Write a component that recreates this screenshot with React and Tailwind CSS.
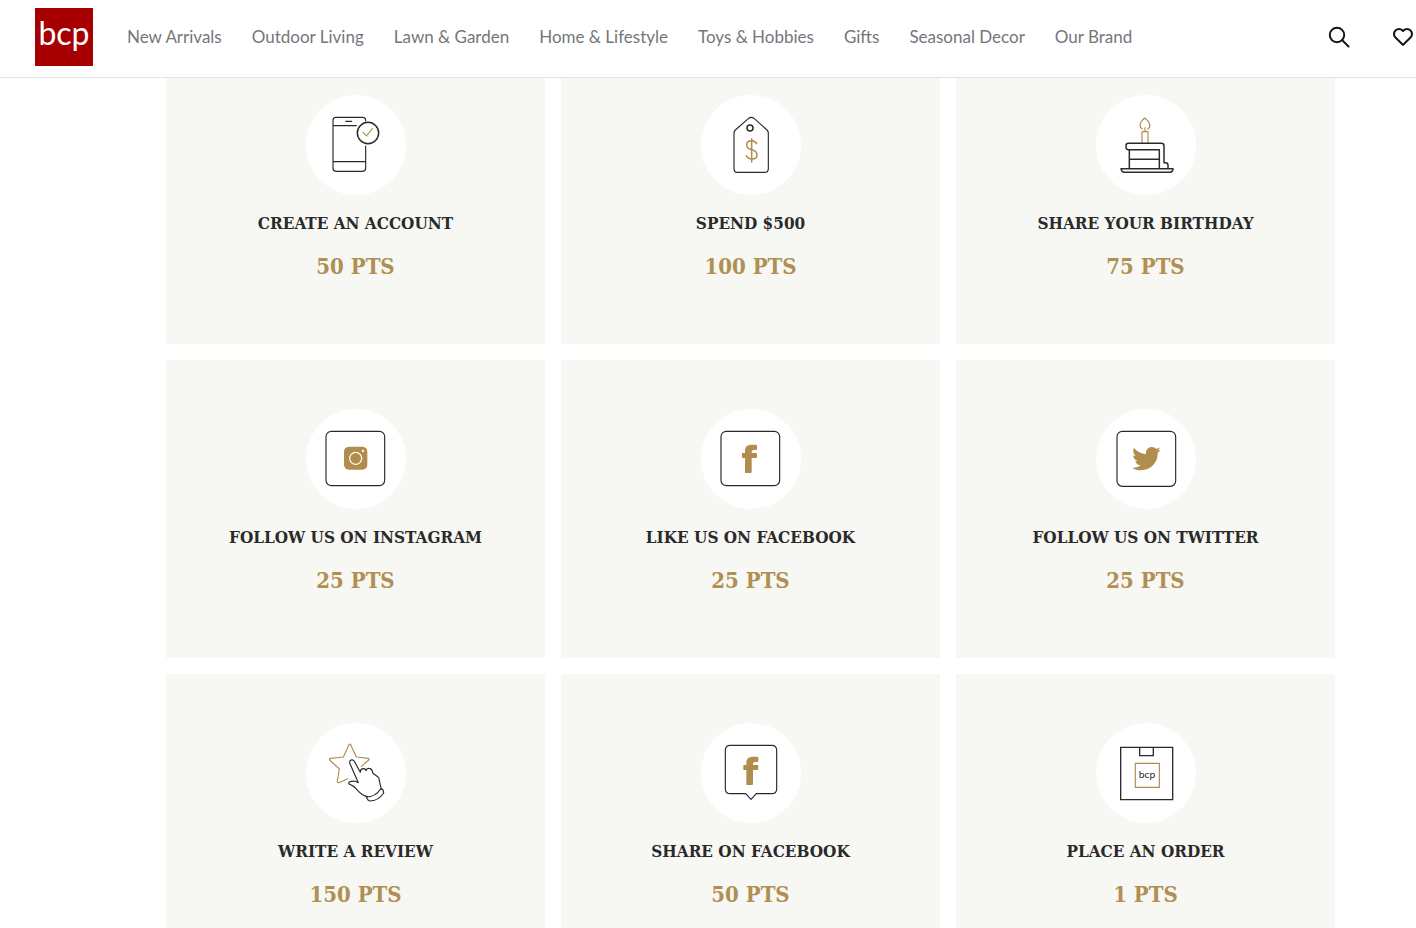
import { BiHeart } from "react-icons/bi";
import { FaTwitter } from "react-icons/fa";

const INK = "#2a2a2c";
const GOLD = "#b08d4c";

const links = [
  "New Arrivals",
  "Outdoor Living",
  "Lawn & Garden",
  "Home & Lifestyle",
  "Toys & Hobbies",
  "Gifts",
  "Seasonal Decor",
  "Our Brand",
];

function Badge({ children }) {
  return (
    <svg
      viewBox="15 15 300 300"
      className="size-[100px] rounded-full bg-white"
      fill="none"
      stroke={INK}
      strokeWidth="3.5"
      strokeLinecap="round"
      strokeLinejoin="round"
      aria-hidden="true"
    >
      {children}
    </svg>
  );
}

function FacebookMark({ x, y }) {
  return (
    <path
      transform={`translate(${x} ${y})`}
      d="M9 85V40H0V25h9V19C9 6 16 0 29 0h13q3 0 3 3v10q0 3-3 3h-7q-6 0-6 6v3h13q3 0 3 3v9q0 3-3 3H29v42q0 3-3 3z"
      fill={GOLD}
      stroke="none"
    />
  );
}

function PhoneIcon() {
  return (
    <Badge>
      <path d="M194 92v-1q0-9-9-9h-80q-9 0-9 9v144q0 9 9 9h80q9 0 9-9v-67M96 107h70M96 215h98M134 94h18" />
      <circle cx="201" cy="129" r="32" strokeWidth="4.5" />
      <path d="M187 127l9 11 18-22" stroke={GOLD} />
    </Badge>
  );
}

function TagIcon() {
  return (
    <Badge>
      <path d="M158 85q8-6 16 0l39 35q4 4 4 9v107q0 11-11 11h-82q-10 0-10-11V129q0-5 4-9z" />
      <circle cx="162" cy="114" r="9" strokeWidth="4.5" />
      <path
        d="M167 146v70M182 161q-5-9-16-9-14 0-14 13 0 9 12 13l9 3q10 4 10 13 0 13-15 13-12 0-17-10"
        stroke={GOLD}
        strokeWidth="4.5"
      />
    </Badge>
  );
}

function CakeIcon() {
  return (
    <Badge>
      <path d="M153 159v-34h18v34M162 124v-11M154 117c-10-6-10-19 7-33 19 14 19 27 9 33" stroke={GOLD} />
      <path
        d="M115 179h-3q-7 0-7-7v-5q0-7 7-7h99q8 0 8 8v50h5q7 0 7 8v8M115 235v-56h90v56M115 208h90M90 236h156q-1 11-9 11H100q-8 0-10-11z"
        strokeWidth="4.5"
      />
    </Badge>
  );
}

function InstagramIcon() {
  return (
    <Badge>
      <rect x="75" y="82" width="176" height="163" rx="16" />
      <rect x="129" y="128" width="70" height="69" rx="15" fill={GOLD} stroke="none" />
      <circle cx="164" cy="163" r="18" stroke="#fff" />
      <circle cx="186" cy="141" r="3.5" fill="#fff" stroke="none" />
    </Badge>
  );
}

function FacebookIcon() {
  return (
    <Badge>
      <rect x="75" y="82" width="176" height="163" rx="16" />
      <FacebookMark x={138} y={122} />
    </Badge>
  );
}

function TwitterIcon() {
  return (
    <Badge>
      <rect x="78" y="82" width="176" height="165" rx="16" />
      <FaTwitter x="123" y="121" size={86} color={GOLD} stroke="none" />
    </Badge>
  );
}

function ReviewIcon() {
  return (
    <Badge>
      <path
        d="M140 182l-26 12q-6 1-5-5l6-36-29-27q-2-4 3-5l38-4 17-37q3-3 5 0l17 37 35 4q5 1 2 5l-22 20"
        stroke={GOLD}
      />
      <path d="M172 194l-25-57q-3-8 3-11 7-2 10 4l18 33q0-10 8-11 7-1 9 6 2-8 9-7 9 0 12 15l14 10q5 4 5 12l6 26M172 194c-9-6-19-5-27-2-3 3-2 6 3 8 19 6 24 30 51 36" />
      <path d="M196 237q27 0 43-24 5-2 7 3l2 9q-16 24-42 24-5-1-7-6z" />
    </Badge>
  );
}

function ShareIcon() {
  return (
    <Badge>
      <path d="M103 82h124q15 0 15 15v115q0 15-15 15h-46l-16 17-16-17h-46q-15 0-15-15V97q0-15 15-15z" />
      <FacebookMark x={142} y={116} />
    </Badge>
  );
}

function BoxIcon() {
  return (
    <Badge>
      <path d="M89 88h156v157H89zM146 88v25h41V88" strokeWidth="4" strokeLinejoin="miter" />
      <rect x="133" y="136" width="72" height="72" stroke={GOLD} />
      <text
        x="168"
        y="180"
        textAnchor="middle"
        className="font-['Lato'] text-[31px] font-normal"
        fill={INK}
        stroke="none"
      >
        bcp
      </text>
    </Badge>
  );
}

const rewards = [
  { title: "CREATE AN ACCOUNT", points: "50 PTS", Icon: PhoneIcon },
  { title: "SPEND $500", points: "100 PTS", Icon: TagIcon },
  { title: "SHARE YOUR BIRTHDAY", points: "75 PTS", Icon: CakeIcon },
  { title: "FOLLOW US ON INSTAGRAM", points: "25 PTS", Icon: InstagramIcon },
  { title: "LIKE US ON FACEBOOK", points: "25 PTS", Icon: FacebookIcon },
  { title: "FOLLOW US ON TWITTER", points: "25 PTS", Icon: TwitterIcon },
  { title: "WRITE A REVIEW", points: "150 PTS", Icon: ReviewIcon },
  { title: "SHARE ON FACEBOOK", points: "50 PTS", Icon: ShareIcon },
  { title: "PLACE AN ORDER", points: "1 PTS", Icon: BoxIcon },
];

export default function App() {
  return (
    <div className="flex h-screen flex-col overflow-hidden bg-white">
      {/* Header */}
      <header className="z-10 flex shrink-0 items-center border-b border-[#e3e3e5] bg-white pt-2 pr-px pb-[11px] pl-[35px] font-['Lato',sans-serif]">
        <a
          href="#home"
          className="flex size-[58px] shrink-0 items-center justify-center bg-[#a60003] pb-2 text-[32px] leading-none text-white"
        >
          bcp
        </a>
        <nav className="ml-[34px] flex gap-[30px] text-[17px] leading-6 whitespace-nowrap text-[#75767b]">
          {links.map((link) => (
            <a key={link} href="#shop">
              {link}
            </a>
          ))}
        </nav>
        <div className="ml-auto flex gap-10 text-[#15151f]">
          <button aria-label="Search">
            <svg viewBox="0 0 24 24" className="size-6" fill="none" stroke="currentColor" strokeWidth="2">
              <circle cx="10" cy="10" r="7.2" />
              <path d="M15 15l6.5 6.5" strokeLinecap="round" />
            </svg>
          </button>
          <button aria-label="Wishlist">
            <BiHeart size={24} />
          </button>
        </div>
      </header>

      {/* Ways to earn points, scrolled a little under the header */}
      <main className="-mt-8 mr-[81px] ml-[166px] grid grid-cols-3 gap-4 font-['Roboto_Slab','DejaVu_Serif_Condensed','DejaVu_Serif',serif] font-bold">
        {rewards.map(({ title, points, Icon }) => (
          <section key={title} className="flex h-[298px] flex-col items-center bg-[#f7f7f4] pt-[49px] text-center">
            <Icon />
            <h2 className="mt-4 text-[17px] leading-6 whitespace-nowrap text-[#2a2a28]">{title}</h2>
            <p className="mt-[15px] text-[22px] leading-8 text-[#b08f52]">{points}</p>
          </section>
        ))}
      </main>
    </div>
  );
}
